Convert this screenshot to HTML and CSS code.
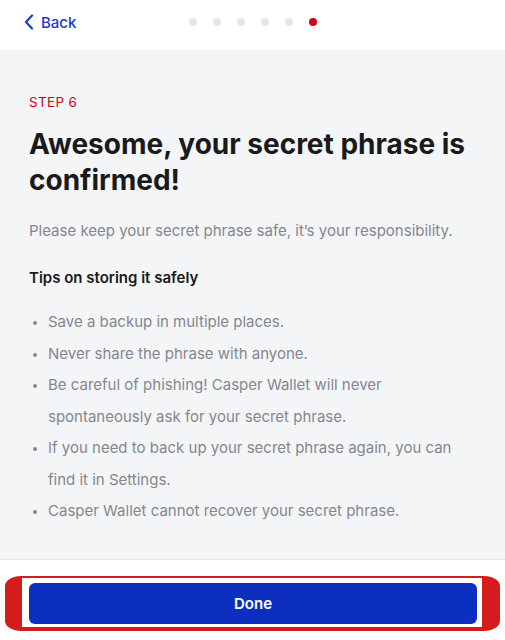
FILE: index.html
```html
<!DOCTYPE html>
<html>
<head>
<meta charset="utf-8">
<link rel="stylesheet" href="styles.css">
</head>
<body>
<div class="page">
  <header class="header">
    <a class="back" href="#">
      <svg class="chev" width="10" height="16" viewBox="0 0 10 16"><path d="M8 1.5 L2 8 L8 14.5" fill="none" stroke="#1a3bc8" stroke-width="2.2" stroke-linecap="round" stroke-linejoin="round"/></svg>
      <span>Back</span>
    </a>
    <div class="dots">
      <span class="dot"></span><span class="dot"></span><span class="dot"></span><span class="dot"></span><span class="dot"></span><span class="dot active"></span>
    </div>
  </header>
  <main class="content">
    <div class="step">STEP 6</div>
    <h1 class="title">Awesome, your secret phrase is confirmed!</h1>
    <p class="lead">Please keep your secret phrase safe, it’s your responsibility.</p>
    <h2 class="subtitle">Tips on storing it safely</h2>
    <ul class="tips">
      <li>Save a backup in multiple places.</li>
      <li>Never share the phrase with anyone.</li>
      <li>Be careful of phishing! Casper Wallet will never spontaneously ask for your secret phrase.</li>
      <li>If you need to back up your secret phrase again, you can find it in Settings.</li>
      <li>Casper Wallet cannot recover your secret phrase.</li>
    </ul>
  </main>
  <footer class="footer">
    <div class="highlight">
      <button class="done">Done</button>
    </div>
  </footer>
</div>
</body>
</html>
```
FILE: styles.css
```css
* { box-sizing: border-box; }
html, body { margin: 0; padding: 0; }
body {
  font-family: Inter, "Noto Sans", sans-serif;
  background: #fff;
  width: 505px;
  height: 640px;
  overflow: hidden;
}
.page {
  display: flex;
  flex-direction: column;
  height: 640px;
}
.header {
  height: 50px;
  flex: none;
  display: flex;
  align-items: center;
  padding: 0 0 6px 24px;
  position: relative;
  background: #fff;
}
.back {
  display: flex;
  align-items: center;
  gap: 7px;
  color: #1a3bc8;
  text-decoration: none;
  font-size: 15px;
  font-weight: 500;
}
.dots {
  position: absolute;
  left: 189px;
  top: 18px;
  display: flex;
  gap: 16px;
}
.dot {
  width: 8px;
  height: 8px;
  border-radius: 50%;
  background: #e5e6ea;
}
.dot.active { background: #d0021b; }
.content {
  flex: 1;
  background: #f4f5f7;
  padding: 44px 29px 0 29px;
  border-bottom: 1px solid #e3e4e8;
}
.step {
  color: #d0021b;
  font-size: 13.5px;
  line-height: 16px;
  letter-spacing: 0.3px;
}
.title {
  margin: 16px 0 0;
  font-size: 28px;
  line-height: 36px;
  font-weight: 700;
  color: #1a1a1a;
}
.lead {
  margin: 21px 0 0;
  font-size: 15px;
  line-height: 24px;
  color: #84878f;
}
.subtitle {
  margin: 23px 0 0;
  font-size: 15px;
  line-height: 24px;
  font-weight: 600;
  color: #1a1a1a;
}
.tips {
  margin: 16px 0 0;
  padding-left: 19px;
  font-size: 15px;
  line-height: 31.5px;
  color: #84878f;
}
.tips li::marker { font-size: 12px; }
.footer {
  flex: none;
  height: 80px;
  background: #fff;
  padding: 16px 5px 0 5px;
}
.highlight {
  border-style: solid;
  border-color: #d41c1c;
  border-width: 2px 18px 4px 17px;
  border-radius: 16px / 10px;
  padding: 5px 5px 3px 7px;
  background: #fff;
}
.done {
  display: block;
  width: 100%;
  height: 41px;
  border: none;
  border-radius: 6px;
  background: #0c2fc0;
  color: #fff;
  font-family: Inter, "Noto Sans", sans-serif;
  font-size: 15px;
  font-weight: 600;
}
```
